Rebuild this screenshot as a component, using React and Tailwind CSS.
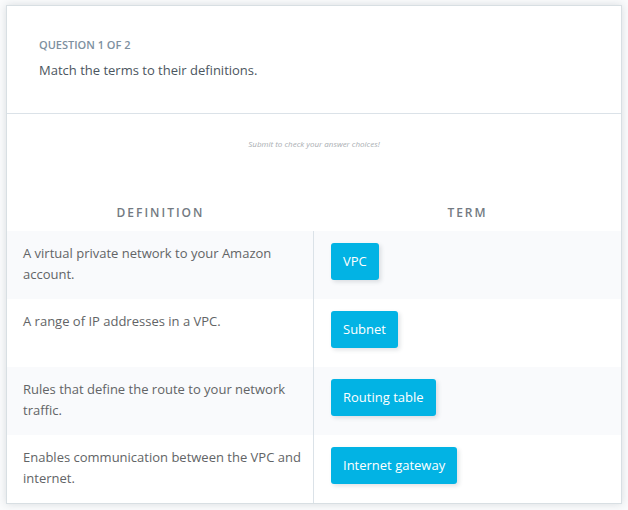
const pairs = [
  { definition: "A virtual private network to your Amazon account.", term: "VPC" },
  { definition: "A range of IP addresses in a VPC.", term: "Subnet" },
  { definition: "Rules that define the route to your network traffic.", term: "Routing table" },
  { definition: "Enables communication between the VPC and internet.", term: "Internet gateway" },
];

export default function App() {
  return (
    <main className="bg-[#fafbfc] px-1.5 pt-[5px] pb-1.5 font-['Open_Sans',sans-serif]">
      <section className="border border-[#d8dfe3] bg-white shadow-[0_0_8px_rgba(46,61,73,0.16)]">
        <header className="border-b border-[#dbe2e8] px-8 pt-7 pb-8">
          <h1 className="text-[11px] leading-[22px] font-semibold text-[#7d90a0] uppercase">Question 1 of 2</h1>
          <p className="pt-1 text-[13px] leading-[21px] text-[#4b5660]">Match the terms to their definitions.</p>
        </header>
        <p className="pt-[22px] text-center text-[8px] leading-4 text-[#a9aeb2] italic">
          Submit to check your answer choices!
        </p>
        <table className="mt-10 w-full table-fixed border-separate border-spacing-0">
          <thead>
            <tr className="text-[12px] leading-5 tracking-[2px] text-[#737a82] uppercase">
              <th scope="col" className="px-0 pt-[11px] pb-2 font-semibold">Definition</th>
              <th scope="col" className="px-0 pt-[11px] pb-2 font-semibold">Term</th>
            </tr>
          </thead>
          <tbody>
            {pairs.map(({ definition, term }) => (
              <tr key={term} className="h-[68px] odd:bg-[#f9fafc]">
                <td className="border-r border-[#dbe2e8] py-3 pr-3 pl-4 align-top text-[13px] leading-[21px] text-[#626466]">
                  {definition}
                </td>
                <td className="px-[17px] py-3 align-top">
                  <button
                    type="button"
                    className="block h-[37px] rounded-[3px] bg-[#02b3e4] px-3 text-[13px] leading-[21px] text-white shadow-[2px_2px_4px_rgba(46,61,73,0.15)]"
                  >
                    {term}
                  </button>
                </td>
              </tr>
            ))}
          </tbody>
        </table>
      </section>
    </main>
  );
}
